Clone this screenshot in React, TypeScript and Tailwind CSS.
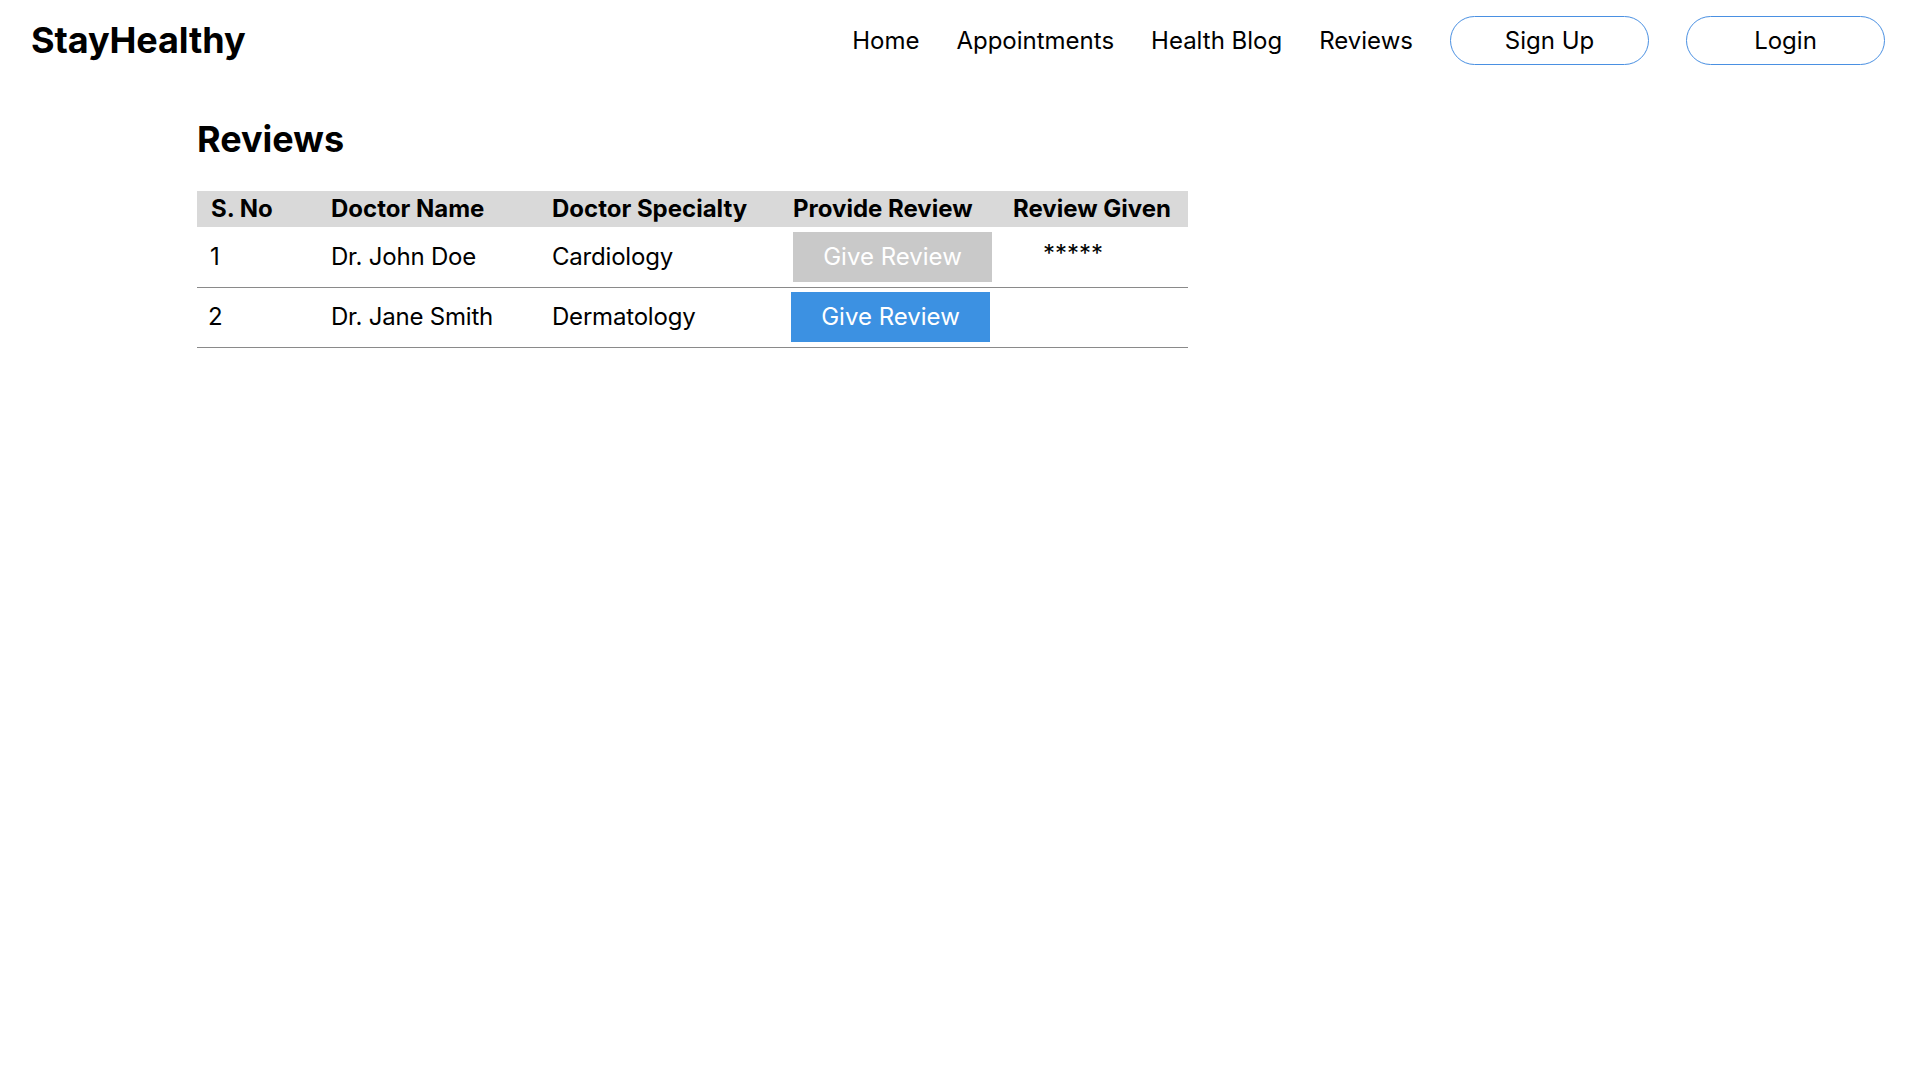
import React from 'react';

const navLinks = ['Home', 'Appointments', 'Health Blog', 'Reviews'];

const doctors = [
  { id: 1, name: 'Dr. John Doe', specialty: 'Cardiology', reviewed: true, review: '*****' },
  { id: 2, name: 'Dr. Jane Smith', specialty: 'Dermatology', reviewed: false, review: '' },
];

export default function App() {
  return (
    <div className="min-h-screen bg-white text-black font-['Inter',sans-serif]">
      {/* Navbar */}
      <nav className="flex items-center justify-between h-[80px] pl-[31px] pr-[35px]">
        <div className="text-[36px] font-bold tracking-[-0.1px]">StayHealthy</div>
        <ul className="flex items-center gap-[37px] text-[24px]">
          {navLinks.map((l) => (
            <li key={l} className="pt-[2px]">
              <a href="#" className="text-black">{l}</a>
            </li>
          ))}
          <li>
            <button className="w-[199px] h-[49px] rounded-full border border-[#4a90e2] bg-white text-[24px] pt-[2px]">Sign Up</button>
          </li>
          <li>
            <button className="w-[199px] h-[49px] rounded-full border border-[#4a90e2] bg-white text-[24px] pt-[2px]">Login</button>
          </li>
        </ul>
      </nav>

      {/* Reviews */}
      <div className="pl-[197px] pt-[37px]">
        <h1 className="text-[36px] font-bold leading-[44px] mb-[30px]">Reviews</h1>
        <table className="border-collapse table-fixed w-[991px] text-[24px]">
          <colgroup>
            <col className="w-[120px]" />
            <col className="w-[221px]" />
            <col className="w-[241px]" />
            <col className="w-[220px]" />
            <col className="w-[189px]" />
          </colgroup>
          <thead>
            <tr className="bg-[#d9d9d9] h-[36px]">
              <th className="text-left font-bold pl-[14px] whitespace-nowrap">S. No</th>
              <th className="text-left font-bold pl-[14px] whitespace-nowrap">Doctor Name</th>
              <th className="text-left font-bold pl-[14px] whitespace-nowrap">Doctor Specialty</th>
              <th className="text-left font-bold pl-[14px] whitespace-nowrap">Provide Review</th>
              <th className="text-left font-bold pl-[14px] whitespace-nowrap">Review Given</th>
            </tr>
          </thead>
          <tbody>
            {doctors.map((d) => (
              <tr key={d.id} className="h-[60px] border-b border-[#8a8a8a]">
                <td className={d.reviewed ? 'pl-[13px]' : 'pl-[11px]'}>{d.id}</td>
                <td className="pl-[14px] whitespace-nowrap tracking-[-0.2px]">{d.name}</td>
                <td className="pl-[14px] tracking-[-0.2px]">{d.specialty}</td>
                <td className="pl-[14px]">
                  <button
                    className={`w-[199px] h-[50px] text-white text-[24px] ${d.reviewed ? 'bg-[#c9c9c9]' : 'bg-[#3c91e2] -ml-[2px]'}`}
                    disabled={d.reviewed}
                  >
                    Give Review
                  </button>
                </td>
                <td className="pl-[44px] align-middle">
                  <span className="relative -top-[3px]">{d.review}</span>
                </td>
              </tr>
            ))}
          </tbody>
        </table>
      </div>
    </div>
  );
}
